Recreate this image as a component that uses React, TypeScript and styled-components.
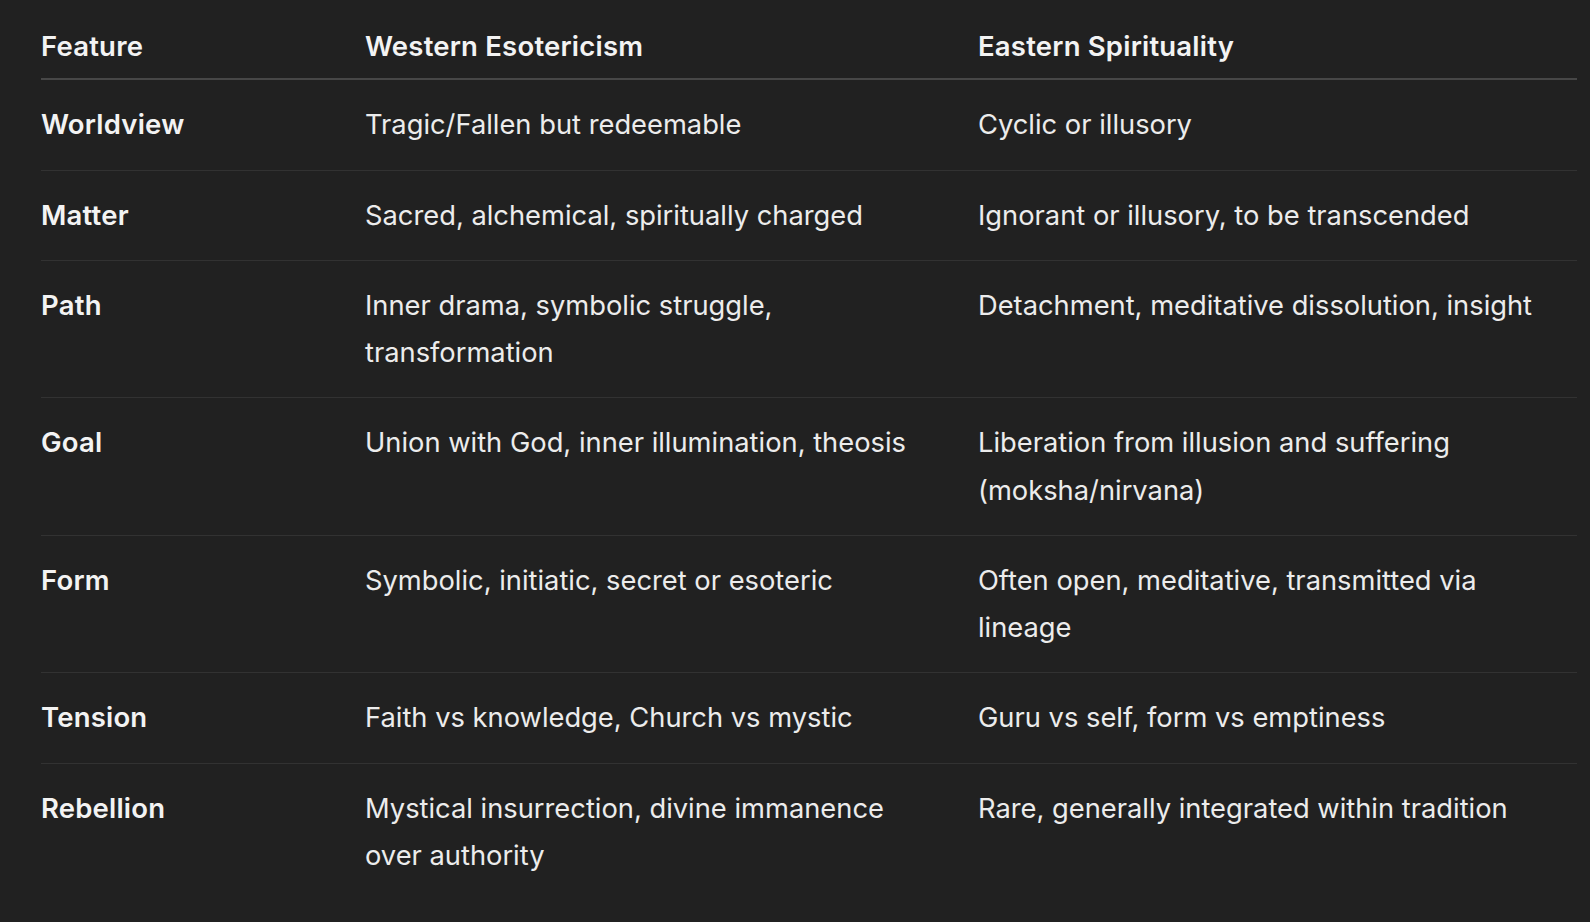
import React from 'react'
import styled, { createGlobalStyle } from 'styled-components'

const GlobalStyle = createGlobalStyle`
  html, body {
    margin: 0;
    padding: 0;
    background: #212121;
  }
  body {
    font-family: Inter, "Noto Sans", "Liberation Sans", sans-serif;
    color: #ececec;
    -webkit-font-smoothing: antialiased;
  }
`

const Page = styled.div`
  min-height: 922px;
  background: #212121;
  padding: 23px 13px 0 41px;
  box-sizing: border-box;
`

const Table = styled.div`
  width: 1536px;
  display: flex;
  flex-direction: column;
`

const Row = styled.div<{ $head?: boolean; $last?: boolean }>`
  display: grid;
  grid-template-columns: 324px 613px 1fr;
  padding: ${({ $head }) => ($head ? '0 0 8px' : '21px 0')};
  border-bottom: ${({ $head, $last }) =>
    $head ? '2px solid #474747' : $last ? 'none' : '1px solid #323232'};
`

const Cell = styled.div<{ $bold?: boolean; $pr?: number }>`
  font-size: ${({ $bold }) => ($bold ? '27.5px' : '27.3px')};
  line-height: 47.25px;
  font-weight: ${({ $bold }) => ($bold ? 600 : 400)};
  color: ${({ $bold }) => ($bold ? '#f3f3f3' : '#ececec')};
  padding-right: ${({ $pr }) => $pr ?? 0}px;
  letter-spacing: ${({ $bold }) => ($bold ? '0.2px' : '0')};
`

const rows: [string, string, string][] = [
  ['Worldview', 'Tragic/Fallen but redeemable', 'Cyclic or illusory'],
  ['Matter', 'Sacred, alchemical, spiritually charged', 'Ignorant or illusory, to be transcended'],
  ['Path', 'Inner drama, symbolic struggle, transformation', 'Detachment, meditative dissolution, insight'],
  ['Goal', 'Union with God, inner illumination, theosis', 'Liberation from illusion and suffering (moksha/nirvana)'],
  ['Form', 'Symbolic, initiatic, secret or esoteric', 'Often open, meditative, transmitted via lineage'],
  ['Tension', 'Faith vs knowledge, Church vs mystic', 'Guru vs self, form vs emptiness'],
  ['Rebellion', 'Mystical insurrection, divine immanence over authority', 'Rare, generally integrated within tradition'],
]

const App: React.FC = () => {
  return (
    <>
      <GlobalStyle />
      <Page>
        <Table>
          <Row $head>
            <Cell $bold>Feature</Cell>
            <Cell $bold $pr={53}>Western Esotericism</Cell>
            <Cell $bold $pr={27}>Eastern Spirituality</Cell>
          </Row>
          {rows.map(([feature, west, east], i) => (
            <Row key={feature} $last={i === rows.length - 1}>
              <Cell $bold>{feature}</Cell>
              <Cell $pr={53}>{west}</Cell>
              <Cell $pr={27}>{east}</Cell>
            </Row>
          ))}
        </Table>
      </Page>
    </>
  )
}

export default App
